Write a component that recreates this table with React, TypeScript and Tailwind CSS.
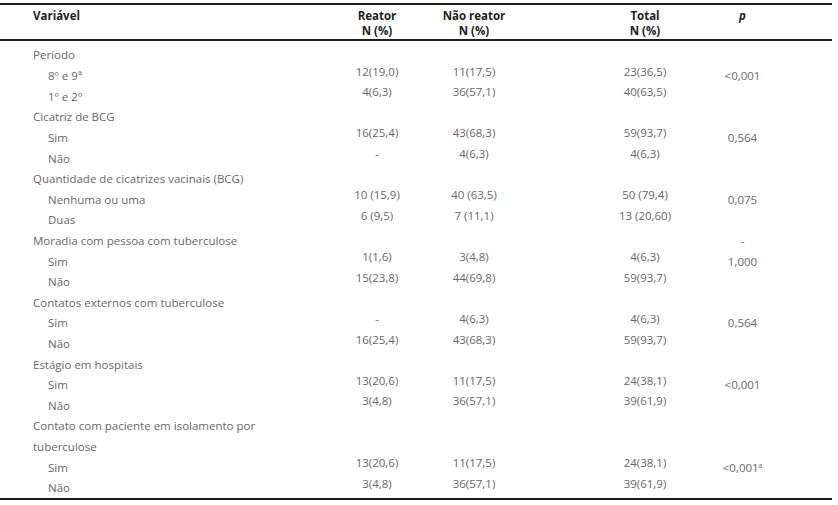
type Item = { label: string; r: string; n: string; t: string };
type Group = { label: string[]; items: Item[]; p: React.ReactNode; pTop?: string };

const GROUPS: Group[] = [
  {
    label: ["Período"],
    items: [
      { label: "8º e 9ª", r: "12(19,0)", n: "11(17,5)", t: "23(36,5)" },
      { label: "1º e 2º", r: "4(6,3)", n: "36(57,1)", t: "40(63,5)" },
    ],
    p: "<0,001",
  },
  {
    label: ["Cicatriz de BCG"],
    items: [
      { label: "Sim", r: "16(25,4)", n: "43(68,3)", t: "59(93,7)" },
      { label: "Não", r: "-", n: "4(6,3)", t: "4(6,3)" },
    ],
    p: "0,564",
  },
  {
    label: ["Quantidade de cicatrizes vacinais (BCG)"],
    items: [
      { label: "Nenhuma ou uma", r: "10 (15,9)", n: "40 (63,5)", t: "50 (79,4)" },
      { label: "Duas", r: "6 (9,5)", n: "7 (11,1)", t: "13 (20,60)" },
    ],
    p: "0,075",
  },
  {
    label: ["Moradia com pessoa com tuberculose"],
    items: [
      { label: "Sim", r: "1(1,6)", n: "3(4,8)", t: "4(6,3)" },
      { label: "Não", r: "15(23,8)", n: "44(69,8)", t: "59(93,7)" },
    ],
    p: "1,000",
    pTop: "-",
  },
  {
    label: ["Contatos externos com tuberculose"],
    items: [
      { label: "Sim", r: "-", n: "4(6,3)", t: "4(6,3)" },
      { label: "Não", r: "16(25,4)", n: "43(68,3)", t: "59(93,7)" },
    ],
    p: "0,564",
  },
  {
    label: ["Estágio em hospitais"],
    items: [
      { label: "Sim", r: "13(20,6)", n: "11(17,5)", t: "24(38,1)" },
      { label: "Não", r: "3(4,8)", n: "36(57,1)", t: "39(61,9)" },
    ],
    p: "<0,001",
  },
  {
    label: ["Contato com paciente em isolamento por", "tuberculose"],
    items: [
      { label: "Sim", r: "13(20,6)", n: "11(17,5)", t: "24(38,1)" },
      { label: "Não", r: "3(4,8)", n: "36(57,1)", t: "39(61,9)" },
    ],
    p: (
      <>
        {"<0,001"}
        <sup className="text-[6.5px] -top-[4px]">a</sup>
      </>
    ),
  },
];

const row = "grid grid-cols-[330px_94px_100px_71px_100px_95px] h-[20.62px] items-center";

export default function App() {
  return (
    <div
      className="w-[838px] h-[505px] bg-white text-[#686868] text-[11.5px] leading-[15px]"
      style={{ fontFamily: '"Open Sans", "Noto Sans", sans-serif' }}
    >
      <div className="w-[832px] pt-[3px]">
        {/* header */}
        <div className="border-t-2 border-b-2 border-[#1e1e1e] h-[38px] pt-[3px] grid grid-cols-[330px_94px_100px_71px_100px_95px] items-start font-bold text-[#222]">
          <div className="pl-[33px]">Variável</div>
          <div className="text-center">
            Reator
            <br />N (%)
          </div>
          <div className="text-center">
            Não reator
            <br />N (%)
          </div>
          <div />
          <div className="text-center">
            Total
            <br />N (%)
          </div>
          <div className="text-center italic">p</div>
        </div>

        {/* body */}
        <div className="pt-[1.7px] pb-[1.7px] border-b-2 border-[#1e1e1e]">
          {GROUPS.map((g, gi) => (
            <div key={gi}>
              {g.label.map((line, li) => (
                <div key={li} className={row}>
                  <div className="pl-[33px] pt-[4px] whitespace-nowrap">{line}</div>
                  <div />
                  <div />
                  <div />
                  <div />
                  <div className="text-center pt-[4px]">{li === 0 ? g.pTop : null}</div>
                </div>
              ))}
              {g.items.map((it, ii) => (
                <div key={ii} className={row}>
                  <div className="pl-[48px] pt-[4px]">{it.label}</div>
                  <div className="text-center pb-[5px]">{it.r}</div>
                  <div className="text-center pb-[5px]">{it.n}</div>
                  <div />
                  <div className="text-center pb-[5px]">{it.t}</div>
                  <div className="text-center pt-[4px]">{ii === 0 ? g.p : null}</div>
                </div>
              ))}
            </div>
          ))}
        </div>
      </div>
    </div>
  );
}
